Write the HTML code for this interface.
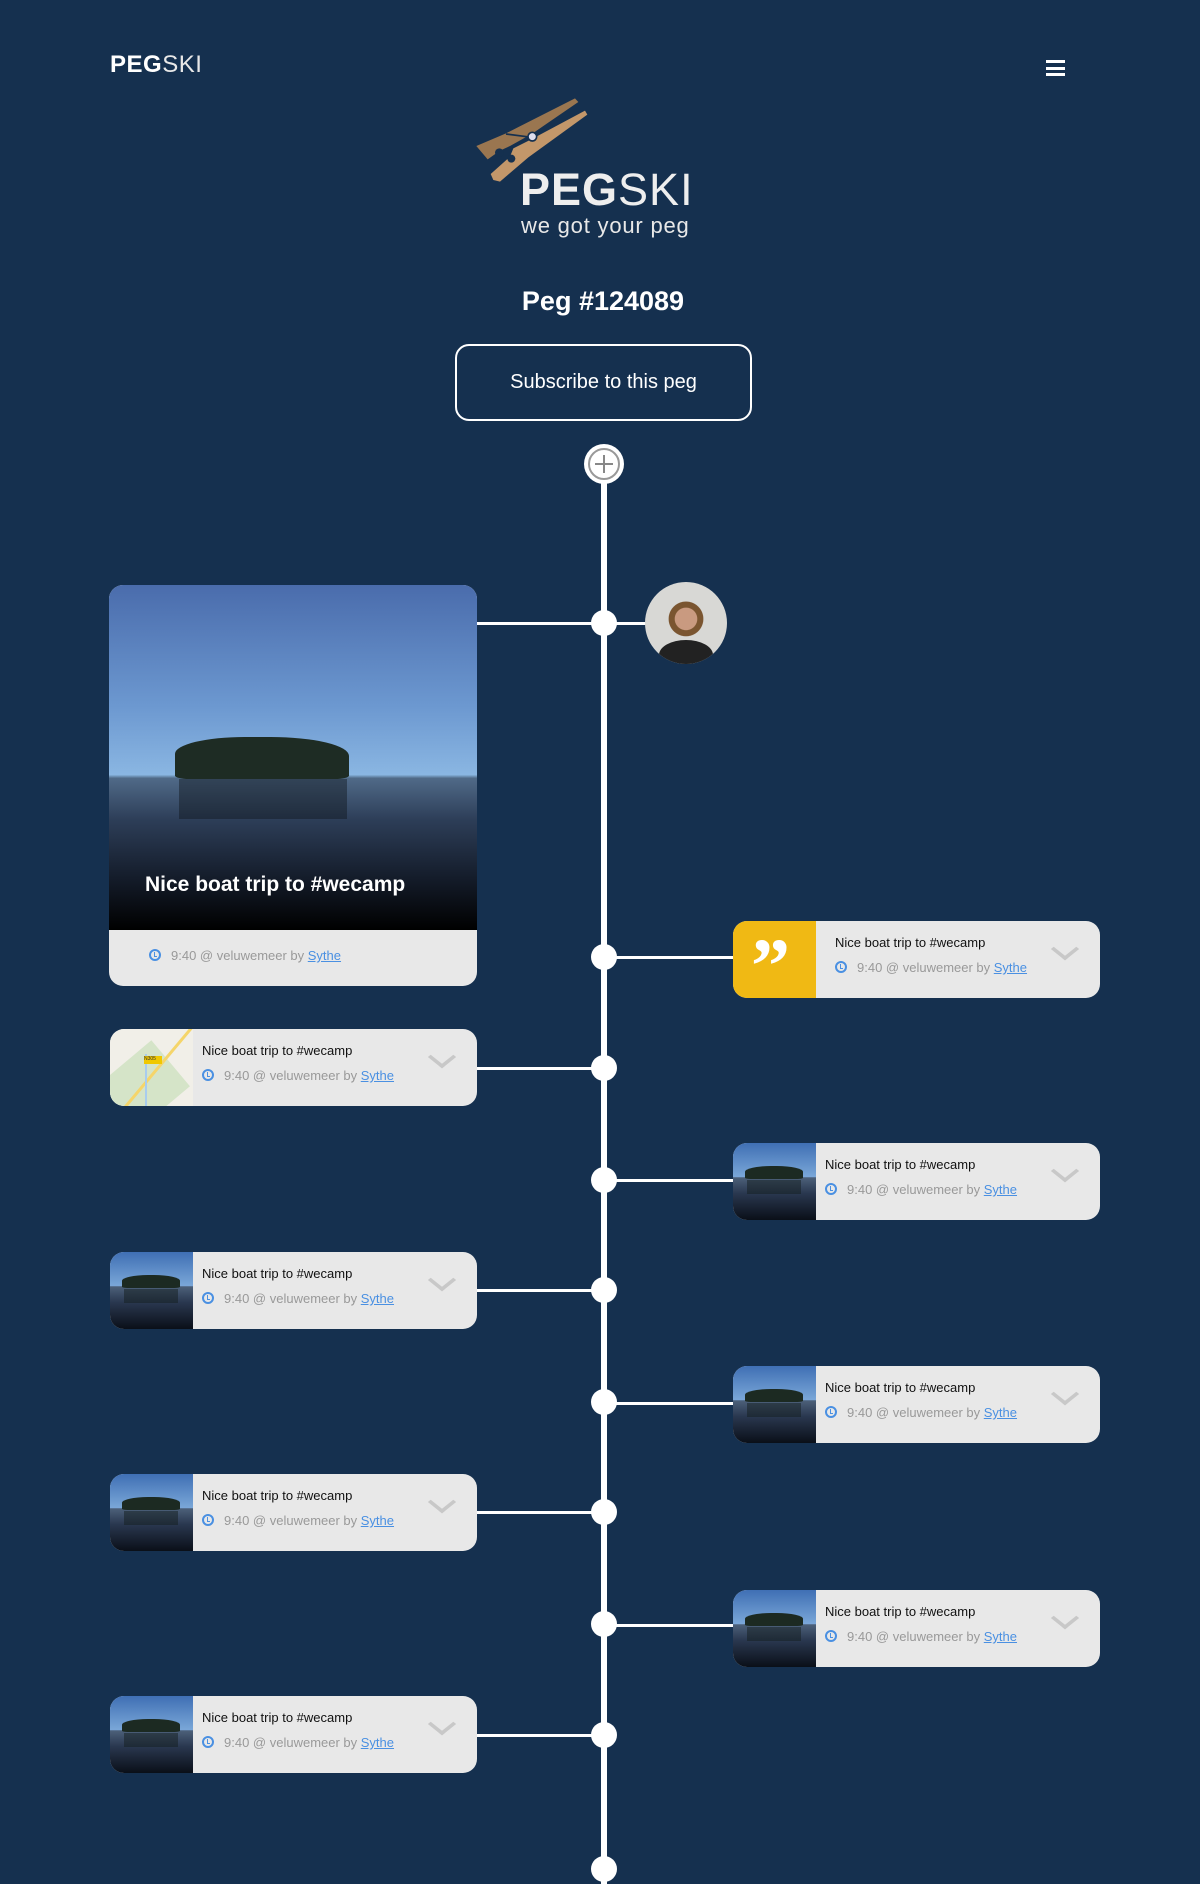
<!DOCTYPE html>
<html><head><meta charset="utf-8"><style>
*{margin:0;padding:0;box-sizing:border-box}
body{width:1200px;height:1864px;background:#15304f;font-family:"Liberation Sans",sans-serif;position:relative;overflow:hidden;color:#fff}
.abs{position:absolute}
.line{position:absolute;left:601px;top:464px;width:6px;height:1420px;background:#fff}
.dot{position:absolute;width:26px;height:26px;border-radius:50%;background:#fff;left:591px}
.conn{position:absolute;height:3px;background:#fff}
.card{position:absolute;width:367px;height:77px;background:#e8e8e8;border-radius:14px;overflow:hidden}
.thumb{position:absolute;left:0;top:0;width:83px;height:77px;overflow:hidden;background:linear-gradient(#3f6fb4 0%,#7aa7d8 44%,#4c6079 45%,#2a3850 65%,#0a0f18 100%)}
.thumb .isl{position:absolute;left:12px;top:23px;width:58px;height:13px;background:#1c2a22;border-radius:45% 45% 10% 10%}
.thumb .ref{position:absolute;left:14px;top:37px;width:54px;height:14px;background:rgba(20,30,30,.5)}
.t1{position:absolute;left:92px;top:14px;font-size:13px;color:#111}
.t2{position:absolute;left:92px;top:39px;font-size:13px;color:#999;white-space:nowrap}
.t2 u{color:#4a90e2}
.clk{display:inline-block;width:12px;height:12px;border:2px solid #4a90e2;border-radius:50%;margin-right:10px;vertical-align:-1px;position:relative}
.clk:after{content:"";position:absolute;left:3px;top:1px;width:2px;height:4px;border-left:1.5px solid #4a90e2;border-bottom:1.5px solid #4a90e2}
.chev{position:absolute;left:322px;top:18px;width:20px;height:20px;border-right:4px solid #c8c8c8;border-bottom:4px solid #c8c8c8;transform:scaleY(.8) rotate(45deg)}
</style></head><body>

<div class="abs" style="left:110px;top:51px;font-size:24px;letter-spacing:0.5px"><b>PEG</b><span style="font-weight:300;color:#e8e8e8">SKI</span></div>
<div class="abs" style="left:1046px;top:60px;width:19px;height:3px;background:#fff"></div>
<div class="abs" style="left:1046px;top:67px;width:19px;height:3px;background:#fff"></div>
<div class="abs" style="left:1046px;top:73px;width:19px;height:3px;background:#fff"></div>

<svg class="abs" style="left:400px;top:80px" width="320" height="170" viewBox="0 0 960 510">
<polygon points="229,198 318,160 525,55 535,66 398,160 330,198 300,212 263,238" fill="#9a7650"/>
<polygon points="272,282 330,230 340,205 390,180 555,92 562,104 385,232 300,305 280,300" fill="#c3976a"/>
<circle cx="298" cy="218" r="13" fill="#15304f"/><circle cx="334" cy="236" r="12" fill="#15304f"/>
<line x1="318" y1="162" x2="395" y2="172" stroke="#15304f" stroke-width="5"/>
<circle cx="397" cy="170" r="13" fill="#dde" stroke="#15304f" stroke-width="5"/>
</svg>
<div class="abs" style="left:520px;top:164px;font-size:45px;color:#eee;letter-spacing:1px"><b>PEG</b><span style="font-weight:300">SKI</span></div>
<div class="abs" style="left:521px;top:213px;font-size:22px;color:#e8e8e8;letter-spacing:0.8px">we got your peg</div>

<div class="abs" style="left:0;width:1206px;top:286px;text-align:center;font-size:27px;font-weight:bold">Peg #124089</div>
<div class="abs" style="left:455px;top:344px;width:297px;height:77px;border:2px solid #fff;border-radius:14px;text-align:center;line-height:73px;font-size:20px">Subscribe to this peg</div>

<div class="line"></div>
<div class="abs" style="left:584px;top:444px;width:40px;height:40px;border-radius:50%;background:#fff"></div>
<div class="abs" style="left:588px;top:448px;width:32px;height:32px;border-radius:50%;border:2px solid #999"></div>
<div class="abs" style="left:595px;top:463px;width:18px;height:2px;background:#888"></div>
<div class="abs" style="left:603px;top:455px;width:2px;height:18px;background:#888"></div>

<div class="conn" style="left:477px;top:622px;width:127px"></div>
<div class="dot" style="top:610px"></div>
<div class="conn" style="left:604px;top:622px;width:45px"></div>
<div class="abs" style="left:645px;top:582px;width:82px;height:82px;border-radius:50%;background:radial-gradient(circle at 50% 45%,#c99a80 0 18%,#7a5530 19% 28%,#d8d8d5 29%);overflow:hidden"><div style="position:absolute;left:14px;top:58px;width:54px;height:30px;border-radius:50% 50% 0 0;background:#222"></div></div>

<div class="abs" style="left:109px;top:585px;width:368px;height:401px;border-radius:14px;overflow:hidden;background:#e8e8e8">
 <div style="position:absolute;left:0;top:0;width:368px;height:345px;background:linear-gradient(#4a6cac 0%,#6c98d0 35%,#8ab6e2 55%,#506a88 56%,#2d3e58 68%,#141c2a 85%,#000 100%)"></div>
 <div style="position:absolute;left:66px;top:152px;width:174px;height:42px;background:#1e2c24;border-radius:40% 45% 8% 8%"></div>
 <div style="position:absolute;left:70px;top:194px;width:168px;height:40px;background:rgba(15,22,28,.45)"></div>
 <div style="position:absolute;left:36px;top:288px;font-size:21px;font-weight:bold">Nice boat trip to #wecamp</div>
 <div class="t2" style="left:40px;top:363px"><span class="clk"></span>9:40 @ veluwemeer by <u>Sythe</u></div>
</div>

<div class="conn" style="left:604px;top:956px;width:130px"></div><div class="dot" style="top:944px"></div>
<div class="card" style="left:733px;top:921px"><div class="thumb" style="background:#f0b914"><div style="position:absolute;left:18px;top:0;font-size:78px;font-weight:bold;color:#fff;line-height:90px;font-family:'Liberation Serif',serif">”</div></div><div class="t1" style="left:102px">Nice boat trip to #wecamp</div><div class="t2" style="left:102px"><span class="clk"></span>9:40 @ veluwemeer by <u>Sythe</u></div><div class="chev"></div></div>

<div class="conn" style="left:477px;top:1067px;width:127px"></div><div class="dot" style="top:1055px"></div>
<div class="card" style="left:110px;top:1029px"><div class="thumb" style="background:#f1efe8"><div style="position:absolute;left:-10px;top:30px;width:80px;height:60px;background:#d5e4c8;transform:rotate(-40deg)"></div><div style="position:absolute;left:-20px;top:35px;width:140px;height:3px;background:#f5d56a;transform:rotate(-50deg)"></div><div style="position:absolute;left:35px;top:25px;width:2px;height:60px;background:#a8ccee"></div><div style="position:absolute;left:34px;top:27px;width:18px;height:8px;background:#f0c800;font-size:5px;color:#333">N305</div></div><div class="t1">Nice boat trip to #wecamp</div><div class="t2"><span class="clk"></span>9:40 @ veluwemeer by <u>Sythe</u></div><div class="chev"></div></div>

<div class="conn" style="left:604px;top:1179px;width:130px"></div><div class="dot" style="top:1167px"></div>
<div class="card" style="left:733px;top:1143px"><div class="thumb"><div class="isl"></div><div class="ref"></div></div><div class="t1">Nice boat trip to #wecamp</div><div class="t2"><span class="clk"></span>9:40 @ veluwemeer by <u>Sythe</u></div><div class="chev"></div></div>

<div class="conn" style="left:477px;top:1289px;width:127px"></div><div class="dot" style="top:1277px"></div>
<div class="card" style="left:110px;top:1252px"><div class="thumb"><div class="isl"></div><div class="ref"></div></div><div class="t1">Nice boat trip to #wecamp</div><div class="t2"><span class="clk"></span>9:40 @ veluwemeer by <u>Sythe</u></div><div class="chev"></div></div>

<div class="conn" style="left:604px;top:1402px;width:130px"></div><div class="dot" style="top:1389px"></div>
<div class="card" style="left:733px;top:1366px"><div class="thumb"><div class="isl"></div><div class="ref"></div></div><div class="t1">Nice boat trip to #wecamp</div><div class="t2"><span class="clk"></span>9:40 @ veluwemeer by <u>Sythe</u></div><div class="chev"></div></div>

<div class="conn" style="left:477px;top:1511px;width:127px"></div><div class="dot" style="top:1499px"></div>
<div class="card" style="left:110px;top:1474px"><div class="thumb"><div class="isl"></div><div class="ref"></div></div><div class="t1">Nice boat trip to #wecamp</div><div class="t2"><span class="clk"></span>9:40 @ veluwemeer by <u>Sythe</u></div><div class="chev"></div></div>

<div class="conn" style="left:604px;top:1624px;width:130px"></div><div class="dot" style="top:1611px"></div>
<div class="card" style="left:733px;top:1590px"><div class="thumb"><div class="isl"></div><div class="ref"></div></div><div class="t1">Nice boat trip to #wecamp</div><div class="t2"><span class="clk"></span>9:40 @ veluwemeer by <u>Sythe</u></div><div class="chev"></div></div>

<div class="conn" style="left:477px;top:1734px;width:127px"></div><div class="dot" style="top:1722px"></div>
<div class="card" style="left:110px;top:1696px"><div class="thumb"><div class="isl"></div><div class="ref"></div></div><div class="t1">Nice boat trip to #wecamp</div><div class="t2"><span class="clk"></span>9:40 @ veluwemeer by <u>Sythe</u></div><div class="chev"></div></div>

<div class="dot" style="top:1856px"></div>
</body></html>
